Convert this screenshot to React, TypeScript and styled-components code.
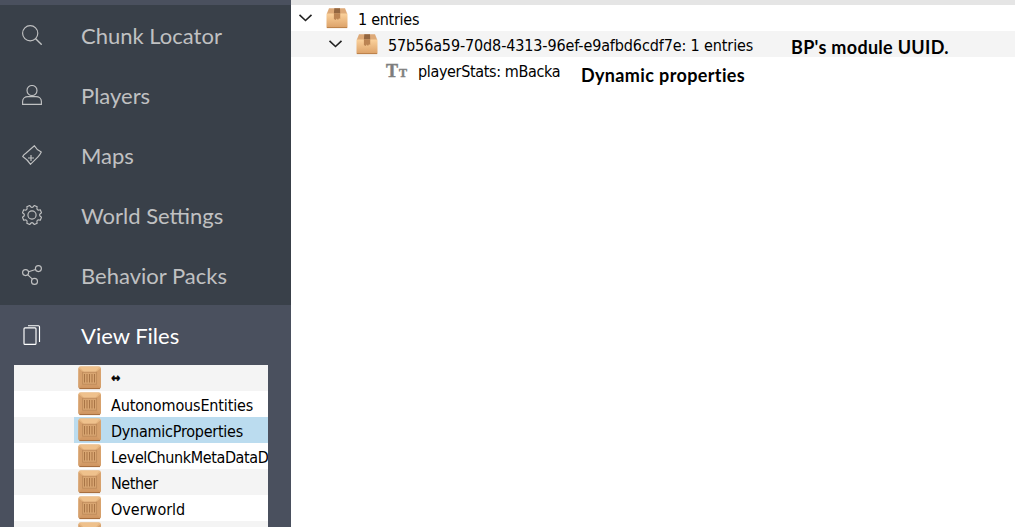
import React from 'react';
import styled, { createGlobalStyle } from 'styled-components';

const GlobalStyle = createGlobalStyle`
  html, body { margin: 0; padding: 0; background: #fff; overflow: hidden; }
  * { box-sizing: border-box; }
`;

const treeFont = '"DejaVu Sans Condensed", "DejaVu Sans", sans-serif';

const Window = styled.div`
  display: flex;
  width: 1015px;
  height: 527px;
  overflow: hidden;
  background: #fff;
`;

const Sidebar = styled.nav`
  display: flex;
  flex-direction: column;
  flex: none;
  width: 291px;
  padding-top: 5px;
  background: #4a505e;
  overflow: hidden;
`;

const NavItem = styled.div<{ $active?: boolean }>`
  display: flex;
  align-items: center;
  flex: none;
  height: 60px;
  padding-left: 22px;
  gap: 39px;
  background: ${(p) => (p.$active ? '#4a505e' : '#394049')};
  color: ${(p) => (p.$active ? '#ffffff' : '#c0c1c2')};

  svg { flex: none; display: block; }
`;

const NavLabel = styled.span`
  padding-top: 1px;
  font: 400 22px/28px Lato, sans-serif;
  white-space: nowrap;
`;

const FileList = styled.div`
  flex: 1;
  width: 254px;
  margin-left: 14px;
  overflow: hidden;
  background: #fff;
`;

const FileRow = styled.div<{ $shaded: boolean }>`
  height: 26px;
  padding-left: 60px;
  background: ${(p) => (p.$shaded ? '#f4f4f4' : '#ffffff')};
`;

const FileCell = styled.div<{ $selected: boolean }>`
  display: flex;
  align-items: flex-start;
  gap: 9px;
  height: 26px;
  padding: 1px 0 0 4px;
  overflow: hidden;
  background: ${(p) => (p.$selected ? '#bbdcef' : 'transparent')};

  svg { flex: none; display: block; }
`;

const ItemText = styled.span<{ $spacing?: number }>`
  font: 400 16px/26px ${treeFont};
  letter-spacing: ${(p) => p.$spacing ?? 0}px;
  white-space: nowrap;
  color: #000;
`;

const FileText = styled(ItemText)`
  padding-top: 1px;
`;

const ArrowText = styled.span`
  font: 700 12px/25px "DejaVu Sans Condensed", "DejaVu Sans", sans-serif;
  -webkit-text-stroke: 0.4px #000;
  color: #000;
`;

const Content = styled.main`
  position: relative;
  flex: 1;
  border-top: 5px solid #e5e5e5;
`;

const TreeRow = styled.div<{ $indent: number; $shaded?: boolean }>`
  display: flex;
  align-items: center;
  height: 26px;
  padding-left: ${(p) => p.$indent}px;
  background: ${(p) => (p.$shaded ? '#f4f4f4' : '#ffffff')};

  svg { flex: none; display: block; }
`;

const Chevron = styled.svg`
  margin-right: 13px;
`;

const TreeText = styled(ItemText)`
  margin-left: 10px;
  padding-top: 3px;
`;

const Annotation = styled.div<{ $x: number; $y: number; $spacing: number }>`
  position: absolute;
  left: ${(p) => p.$x}px;
  top: ${(p) => p.$y}px;
  font: 700 18px/22px Lato, sans-serif;
  letter-spacing: ${(p) => p.$spacing}px;
  white-space: nowrap;
  color: #000;
`;

const LineIcon = ({ children }: { children: React.ReactNode }) => (
  <svg width="20" height="20" viewBox="0 0 20 20" fill="none" stroke="currentColor" strokeWidth="1.15">
    {children}
  </svg>
);

const SearchIcon = () => (
  <LineIcon>
    <circle cx="8.2" cy="8.2" r="7.6" />
    <path d="M13.4 13.4L19.7 19.7" strokeWidth="1.4" />
  </LineIcon>
);

const PersonIcon = () => (
  <LineIcon>
    <circle cx="10" cy="5.5" r="5" />
    <path d="M.6 19.4V16.5C.6 13.5 3 11.6 6 11.6H14C17 11.6 19.4 13.5 19.4 16.5V19.4Z" />
  </LineIcon>
);

const MapIcon = () => (
  <LineIcon>
    <path
      strokeLinejoin="round"
      d="M12.4.7Q14.6 4.8 19.3 7.1Q18.2 9.6 16 11.8L8.4 19.3Q5.8 14.6.7 11.4Q1.4 9.8 3.8 8.2Z"
    />
    <path d="M9 10V16M6 13H12" />
  </LineIcon>
);

const polar = (radius: number, degrees: number) => {
  const a = (degrees * Math.PI) / 180;
  return `${(10 + radius * Math.cos(a)).toFixed(2)} ${(10 + radius * Math.sin(a)).toFixed(2)}`;
};

const gearPath =
  Array.from({ length: 8 }, (_, i) => {
    const a = i * 45;
    return `${i ? 'L' : 'M'}${polar(9.8, a - 13)}Q${polar(5.6, a)} ${polar(9.8, a + 13)}`;
  }).join('') + 'Z';

const GearIcon = () => (
  <LineIcon>
    <circle cx="10" cy="10" r="4.1" />
    <path strokeLinejoin="round" d={gearPath} />
  </LineIcon>
);

const ShareIcon = () => (
  <LineIcon>
    <circle cx="3.6" cy="7.6" r="3" />
    <circle cx="16.4" cy="3.6" r="3" />
    <circle cx="12.5" cy="16.4" r="3" />
    <path d="M6.6 6.7L13.5 4.5M5.8 9.8L10.4 14.2" />
  </LineIcon>
);

const PagesIcon = () => (
  <LineIcon>
    <rect x="2" y="2.8" width="12" height="16.6" rx="1" />
    <path d="M6 .7H16.4Q17.5.7 17.5 1.8V17" />
  </LineIcon>
);

const CrateIcon = () => (
  <svg width="24" height="24" viewBox="0 0 24 24">
    <defs>
      <linearGradient id="crate" x1="0" y1="0" x2="0" y2="1">
        <stop offset="0" stopColor="#eabb85" />
        <stop offset="1" stopColor="#ce9460" />
      </linearGradient>
    </defs>
    <rect x=".3" y=".3" width="22.7" height="22.7" rx="2.4" fill="url(#crate)" />
    <path d="M2 1H21L17.5 6H6Z" fill="#efc18c" />
    <path d="M.5 2L5.5 6.5V18L.5 22ZM22.8 2L17.8 6.5V18L22.8 22Z" fill="#d6a06c" />
    <rect x="4.6" y="6.2" width="14" height="12" fill="#d8a571" stroke="#bf8b5b" strokeWidth=".9" />
    <path d="M6.5 8V16.5M9 8V16.5M11.5 8V16.5M14 8V16.5M16.5 8V16.5" stroke="#a97546" strokeWidth="1" />
    <path d="M1.4 22.6H22" stroke="#a46c3c" strokeWidth="1" />
  </svg>
);

const BoxIcon = () => (
  <svg width="22" height="22" viewBox="0 0 22 22">
    <defs>
      <linearGradient id="box" x1="0" y1="0" x2="0" y2="1">
        <stop offset="0" stopColor="#fbd29c" />
        <stop offset="1" stopColor="#dca168" />
      </linearGradient>
    </defs>
    <path d="M3 1.2H19L21.3 7H.7Z" fill="#dda977" />
    <rect x=".5" y="6.5" width="21" height="14.3" rx="1" fill="url(#box)" />
    <path d="M.8 20.6H21.2" stroke="#b97d45" strokeWidth="1" />
    <path d="M8.3 1.2H14L14.2 6.5H7.9Z" fill="#936640" />
    <path d="M7.9 6.5H14.2V12L13 11.2L12 13L10.7 11.5L9.7 13L7.9 12Z" fill="#bb8453" />
  </svg>
);

const TypeGlyph = styled.span`
  display: flex;
  align-items: baseline;
  width: 22px;
  margin-top: 3px;
  font: 700 18px/20px "Liberation Serif", serif;
  color: #7c7c7c;
  -webkit-text-stroke: 0.5px #858585;

  small { font-size: 12px; margin-left: 1px; }
`;

const Toggle = () => (
  <Chevron width="15" height="10" viewBox="0 0 15 10" fill="none" stroke="#222" strokeWidth="1.6">
    <path d="M1.5 1.8L7.5 7.5L13.5 1.8" />
  </Chevron>
);

const navItems = [
  { label: 'Chunk Locator', Icon: SearchIcon },
  { label: 'Players', Icon: PersonIcon },
  { label: 'Maps', Icon: MapIcon },
  { label: 'World Settings', Icon: GearIcon },
  { label: 'Behavior Packs', Icon: ShareIcon },
  { label: 'View Files', Icon: PagesIcon, active: true },
];

const files = [
  { name: '↔' },
  { name: 'AutonomousEntities', spacing: -0.14 },
  { name: 'DynamicProperties', spacing: -0.25, selected: true },
  { name: 'LevelChunkMetaDataD', spacing: -0.4 },
  { name: 'Nether', spacing: -0.4 },
  { name: 'Overworld', spacing: 0 },
  { name: '' },
];

export default function App() {
  return (
    <Window>
      <GlobalStyle />
      <Sidebar>
        {navItems.map(({ label, Icon, active }) => (
          <NavItem key={label} $active={active}>
            <Icon />
            <NavLabel>{label}</NavLabel>
          </NavItem>
        ))}
        <FileList>
          {files.map(({ name, spacing, selected }, i) => (
            <FileRow key={i} $shaded={i % 2 === 0}>
              <FileCell $selected={!!selected}>
                <CrateIcon />
                {name === '↔' ? <ArrowText>{name}</ArrowText> : <FileText $spacing={spacing}>{name}</FileText>}
              </FileCell>
            </FileRow>
          ))}
        </FileList>
      </Sidebar>
      <Content>
        <TreeRow $indent={7}>
          <Toggle />
          <BoxIcon />
          <TreeText $spacing={-0.28}>1 entries</TreeText>
        </TreeRow>
        <TreeRow $indent={37} $shaded>
          <Toggle />
          <BoxIcon />
          <TreeText $spacing={-0.12}>57b56a59-70d8-4313-96ef-e9afbd6cdf7e: 1 entries</TreeText>
        </TreeRow>
        <TreeRow $indent={95}>
          <TypeGlyph>T<small>T</small></TypeGlyph>
          <TreeText $spacing={-0.35}>playerStats: mBacka</TreeText>
        </TreeRow>
        <Annotation $x={500} $y={31} $spacing={0.3}>BP's module UUID.</Annotation>
        <Annotation $x={290} $y={59} $spacing={0.37}>Dynamic properties</Annotation>
      </Content>
    </Window>
  );
}
